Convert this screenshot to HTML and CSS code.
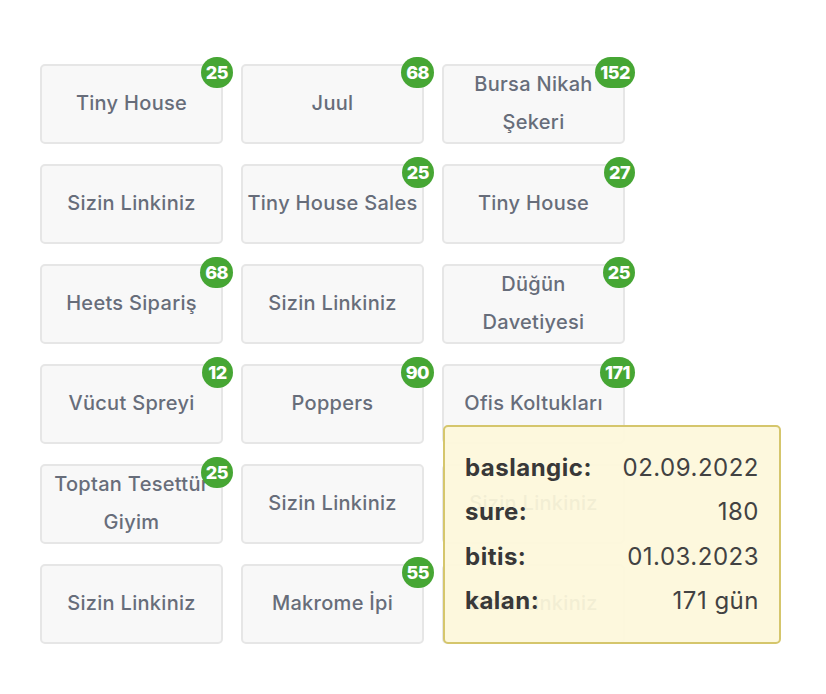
FILE: index.html
```html
<!DOCTYPE html>
<html lang="tr">
<head>
<meta charset="utf-8">
<title>Linkler</title>
<link rel="stylesheet" href="styles.css">
</head>
<body>
<div class="page">
  <div class="grid">
    <div class="card"><span class="label">Tiny House</span><span class="badge">25</span></div>
    <div class="card"><span class="label">Juul</span><span class="badge">68</span></div>
    <div class="card"><span class="label">Bursa Nikah<br>Şekeri</span><span class="badge">152</span></div>

    <div class="card"><span class="label">Sizin Linkiniz</span></div>
    <div class="card"><span class="label">Tiny House Sales</span><span class="badge">25</span></div>
    <div class="card"><span class="label">Tiny House</span><span class="badge">27</span></div>

    <div class="card"><span class="label">Heets Sipariş</span><span class="badge">68</span></div>
    <div class="card"><span class="label">Sizin Linkiniz</span></div>
    <div class="card"><span class="label">Düğün<br>Davetiyesi</span><span class="badge">25</span></div>

    <div class="card"><span class="label">Vücut Spreyi</span><span class="badge">12</span></div>
    <div class="card"><span class="label">Poppers</span><span class="badge">90</span></div>
    <div class="card"><span class="label">Ofis Koltukları</span><span class="badge">171</span></div>

    <div class="card"><span class="label">Toptan Tesettür<br>Giyim</span><span class="badge">25</span></div>
    <div class="card"><span class="label">Sizin Linkiniz</span></div>
    <div class="card"><span class="label">Sizin Linkiniz</span></div>

    <div class="card"><span class="label">Sizin Linkiniz</span></div>
    <div class="card"><span class="label">Makrome İpi</span><span class="badge">55</span></div>
    <div class="card"><span class="label">Sizin Linkiniz</span></div>
  </div>

  <div class="tooltip">
    <div class="row"><span class="key">baslangic:</span><span class="val">02.09.2022</span></div>
    <div class="row"><span class="key">sure:</span><span class="val">180</span></div>
    <div class="row"><span class="key">bitis:</span><span class="val">01.03.2023</span></div>
    <div class="row"><span class="key">kalan:</span><span class="val">171 gün</span></div>
  </div>
</div>
</body>
</html>
```
FILE: styles.css
```css
* { box-sizing: border-box; }
html, body { margin: 0; padding: 0; background: #ffffff; }
body {
  font-family: Inter, "Noto Sans", sans-serif;
}
.page {
  position: relative;
  width: 826px;
  height: 694px;
  padding: 64px 0 0 40px;
}
.grid {
  display: grid;
  grid-template-columns: repeat(3, 183px);
  grid-auto-rows: 80px;
  column-gap: 18px;
  row-gap: 20px;
}
.card {
  position: relative;
  display: flex;
  align-items: center;
  justify-content: center;
  text-align: center;
  background: #f8f8f8;
  border: 2px solid #e6e6e6;
  border-radius: 5px;
  color: #676d7a;
  font-size: 20px;
  font-weight: 500;
  letter-spacing: 0.3px;
  line-height: 38px;
  white-space: nowrap;
  padding-bottom: 3px;
}
.label { display: block; }
.badge {
  position: absolute;
  top: -9px;
  right: -12px;
  height: 31px;
  min-width: 31px;
  padding: 0 5px;
  border-radius: 16px;
  background: #46a634;
  color: #ffffff;
  font-size: 18px;
  font-weight: 800;
  line-height: 31px;
  text-align: center;
  letter-spacing: -0.5px;
}
.tooltip {
  position: absolute;
  left: 443px;
  top: 425px;
  width: 338px;
  height: 219px;
  background: rgba(253, 248, 218, 0.93);
  border: 2px solid #d5c66c;
  border-radius: 5px;
  padding: 18px 20px 0 20px;
  display: flex;
  flex-direction: column;
  color: #3e3e3e;
  font-size: 24px;
  letter-spacing: 0.5px;
}
.row {
  display: flex;
  justify-content: space-between;
  align-items: center;
  height: 44.5px;
}
.key { font-weight: 700; color: #383838; }
.val { font-weight: 400; color: #424242; }
```
